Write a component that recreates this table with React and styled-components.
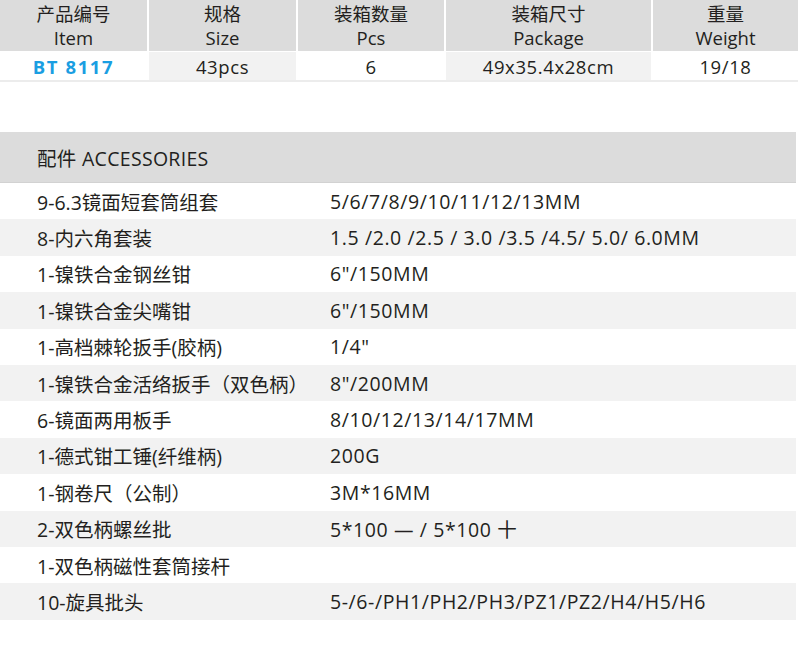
import React from "react";
import styled, { createGlobalStyle } from "styled-components";

const Global = createGlobalStyle`
  html, body { margin: 0; padding: 0; background: #ffffff; }
  body { font-family: "Open Sans", "Noto Sans CJK SC", sans-serif; color: #231f20; }
`;

const Page = styled.div`
  width: 800px;
  height: 657px;
  display: flex;
  flex-direction: column;
  overflow: hidden;
`;

const SpecTable = styled.div`
  display: grid;
  grid-template-columns: 147px 147px 146px 205px 145px;
  column-gap: 2px;
  row-gap: 1px;
  width: 798px;
  border-bottom: 2px solid #ececec;
`;

const HeadCell = styled.div`
  background: #dcdcdc;
  height: 51px;
  display: flex;
  flex-direction: column;
  align-items: center;
  justify-content: center;
  font-size: 18.5px;
  color: #231f20;
`;

const HeadLine = styled.div`
  line-height: 24px;
  height: 24px;
  white-space: nowrap;
`;

const DataCell = styled.div`
  height: 28px;
  display: flex;
  align-items: center;
  justify-content: center;
  background: ${(p) => (p.$shade ? "#f2f2f2" : "#ffffff")};
  font-size: 18.5px;
  color: ${(p) => (p.$accent ? "#1a9ee2" : "#231f20")};
  font-weight: ${(p) => (p.$accent ? 700 : 400)};
  letter-spacing: ${(p) => (p.$accent ? "1.6px" : "0.6px")};
`;

const Accessories = styled.div`
  margin-top: 50px;
  width: 796px;
  display: flex;
  flex-direction: column;
`;

const AccHead = styled.div`
  height: 51px;
  background: #dcdcdc;
  display: flex;
  align-items: center;
  padding-left: 37px;
  font-size: 19.5px;
  letter-spacing: 0.3px;
  color: #231f20;
  border-bottom: 1px solid #d2d2d2;
  box-sizing: border-box;
`;

const AccRow = styled.div`
  height: 36.4px;
  display: grid;
  grid-template-columns: 293px 1fr;
  align-items: center;
  padding-left: 37px;
  background: ${(p) => (p.$shade ? "#f2f2f2" : "#ffffff")};
  font-size: 19.5px;
  color: #231f20;
`;

const Cell = styled.span`
  white-space: nowrap;
  letter-spacing: ${(p) => (p.$value ? "0.6px" : "0")};
`;

const specs = [
  { zh: "产品编号", en: "Item", val: "BT 8117", accent: true },
  { zh: "规格", en: "Size", val: "43pcs", shade: true },
  { zh: "装箱数量", en: "Pcs", val: "6" },
  { zh: "装箱尺寸", en: "Package", val: "49x35.4x28cm", shade: true },
  { zh: "重量", en: "Weight", val: "19/18" },
];

const items = [
  ["9-6.3镜面短套筒组套", "5/6/7/8/9/10/11/12/13MM"],
  ["8-内六角套装", "1.5 /2.0 /2.5 / 3.0 /3.5 /4.5/ 5.0/ 6.0MM"],
  ["1-镍铁合金钢丝钳", "6\"/150MM"],
  ["1-镍铁合金尖嘴钳", "6\"/150MM"],
  ["1-高档棘轮扳手(胶柄)", "1/4\""],
  ["1-镍铁合金活络扳手（双色柄）", "8\"/200MM"],
  ["6-镜面两用板手", "8/10/12/13/14/17MM"],
  ["1-德式钳工锤(纤维柄)", "200G"],
  ["1-钢卷尺（公制）", "3M*16MM"],
  ["2-双色柄螺丝批", "5*100 — / 5*100 十"],
  ["1-双色柄磁性套筒接杆", ""],
  ["10-旋具批头", "5-/6-/PH1/PH2/PH3/PZ1/PZ2/H4/H5/H6"],
];

export default function App() {
  return (
    <Page>
      <Global />
      <SpecTable>
        {specs.map((s) => (
          <HeadCell key={s.en}>
            <HeadLine>{s.zh}</HeadLine>
            <HeadLine>{s.en}</HeadLine>
          </HeadCell>
        ))}
        {specs.map((s) => (
          <DataCell key={s.en + "v"} $shade={s.shade} $accent={s.accent}>
            {s.val}
          </DataCell>
        ))}
      </SpecTable>
      <Accessories>
        <AccHead>配件 ACCESSORIES</AccHead>
        {items.map(([name, size], i) => (
          <AccRow key={name} $shade={i % 2 === 1}>
            <Cell>{name}</Cell>
            <Cell $value>{size}</Cell>
          </AccRow>
        ))}
      </Accessories>
    </Page>
  );
}
